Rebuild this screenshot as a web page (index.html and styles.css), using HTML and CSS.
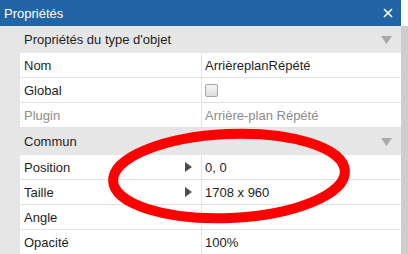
FILE: index.html
```html
<!DOCTYPE html>
<html lang="fr">
<head>
<meta charset="utf-8">
<title>Propriétés</title>
<link rel="stylesheet" href="styles.css">
</head>
<body>
<div class="panel">
  <div class="titlebar">
    <span class="title">Propriétés</span>
    <svg class="close" width="10" height="10" viewBox="0 0 10 10"><path d="M1 1L9 9M9 1L1 9" stroke="#fff" stroke-width="1.6"/></svg>
  </div>
  <div class="body">
    <div class="grid">
      <div class="section"><span>Propriétés du type d'objet</span><svg class="caret" width="11" height="8" viewBox="0 0 11 8"><path d="M0 0H11L5.5 8Z" fill="#aaa"/></svg></div>
      <div class="row"><div class="name">Nom</div><div class="value">ArrièreplanRépété</div></div>
      <div class="row"><div class="name">Global</div><div class="value"><span class="checkbox"></span></div></div>
      <div class="row"><div class="name muted">Plugin</div><div class="value muted">Arrière-plan Répété</div></div>
      <div class="section"><span>Commun</span><svg class="caret" width="11" height="8" viewBox="0 0 11 8"><path d="M0 0H11L5.5 8Z" fill="#aaa"/></svg></div>
      <div class="row"><div class="name">Position<svg class="expander" width="7" height="10" viewBox="0 0 7 10"><path d="M0 0L7 5L0 10Z" fill="#4d4d4d"/></svg></div><div class="value">0, 0</div></div>
      <div class="row"><div class="name">Taille<svg class="expander" width="7" height="10" viewBox="0 0 7 10"><path d="M0 0L7 5L0 10Z" fill="#4d4d4d"/></svg></div><div class="value">1708 x 960</div></div>
      <div class="row"><div class="name">Angle</div><div class="value"></div></div>
      <div class="row"><div class="name">Opacité</div><div class="value">100%</div></div>
    </div>
    <div class="scrollbar"></div>
  </div>
  <svg class="annotation" width="408" height="254" viewBox="0 0 408 254">
    <ellipse cx="229" cy="176" rx="116" ry="42" fill="none" stroke="#ff0000" stroke-width="10" transform="rotate(-2.5 229 176)"/>
  </svg>
</div>
</body>
</html>
```

FILE: styles.css
```css
html, body {
  margin: 0;
  padding: 0;
  background: #ffffff;
}

.panel {
  position: relative;
  width: 408px;
  height: 254px;
  overflow: hidden;
  font-family: "Liberation Sans", Arial, sans-serif;
  font-size: 13px;
  color: #1e1e1e;
}

.titlebar {
  width: 401px;
  height: 26px;
  background: #2265a5;
  color: #ffffff;
  display: flex;
  align-items: center;
  justify-content: space-between;
  padding: 0 8px 0 4px;
  box-sizing: border-box;
}

.body {
  display: flex;
}

.grid {
  width: 401px;
  background: #e6e6e6;
}

.scrollbar {
  width: 7px;
  background: #cdcdcd;
}

.section {
  height: 27px;
  display: flex;
  align-items: center;
  justify-content: space-between;
  padding: 0 9px 0 24px;
  box-sizing: border-box;
  background: #e6e6e6;
}

.row {
  margin-left: 20px;
  height: 25px;
  display: flex;
  background: #ffffff;
  border-bottom: 1px solid #e2e2e2;
  box-sizing: border-box;
}

.name {
  width: 182px;
  box-sizing: border-box;
  border-right: 1px solid #e2e2e2;
  display: flex;
  align-items: center;
  justify-content: space-between;
  padding: 0 9px 0 4px;
}

.value {
  flex: 1;
  display: flex;
  align-items: center;
  padding-left: 3px;
}

.muted {
  color: #8c8c8c;
}

.checkbox {
  width: 11px;
  height: 11px;
  border: 1px solid #a5a5a5;
  border-radius: 2px;
  background: linear-gradient(#f6f6f6, #dedede);
}

.annotation {
  position: absolute;
  left: 0;
  top: 0;
  pointer-events: none;
}
```
